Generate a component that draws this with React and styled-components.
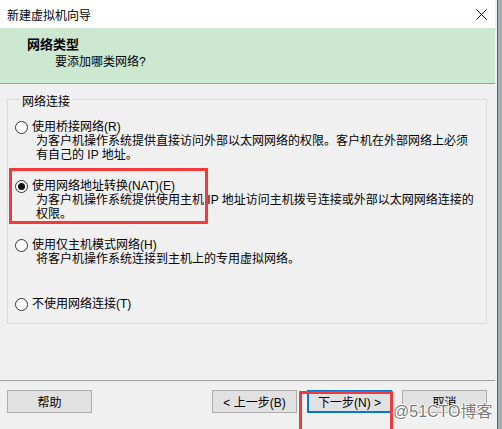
import styled, { createGlobalStyle } from "styled-components";

const GlobalStyle = createGlobalStyle`
  html, body {
    margin: 0;
    padding: 0;
    background: #ffffff;
  }
  body {
    font-family: "Liberation Sans", "Noto Sans CJK SC", sans-serif;
    font-size: 12px;
    color: #000;
  }
`;

const Page = styled.div`
  display: flex;
  width: 502px;
  height: 429px;
  overflow: hidden;
`;

const Window = styled.div`
  position: relative;
  display: flex;
  flex-direction: column;
  width: 495px;
  height: 429px;
  overflow: hidden;
  background: #f0f0f0;
`;

const RightStrip = styled.div`
  display: flex;
  flex: 1;
`;

const StripPart = styled.div`
  width: ${(p) => p.$w}px;
  background: ${(p) => p.$bg};
`;

const TitleBar = styled.div`
  display: flex;
  align-items: center;
  justify-content: space-between;
  height: 28px;
  padding: 0 8px 0 7px;
  background: #ffffff;
  font-family: "Noto Sans CJK SC", sans-serif;
  font-size: 12px;
`;

const Header = styled.div`
  display: flex;
  flex-direction: column;
  height: 56px;
  padding: 8px 0 0 27px;
  box-sizing: border-box;
  background: #cde8d1;
  border-bottom: 1px solid #a0a0a0;
`;

const HeaderTitle = styled.div`
  font-family: "Noto Sans CJK SC", sans-serif;
  font-weight: 700;
  font-size: 13px;
  line-height: 16px;
`;

const HeaderSub = styled.div`
  padding-left: 28px;
  margin-top: 2px;
  line-height: 16px;
`;

const Body = styled.div`
  flex: 1;
  padding: 6px 8px 0 7px;
`;

const Group = styled.fieldset`
  margin: 0;
  padding: 12px 7px 12px 7px;
  border: 1px solid #dcdcdc;
  min-width: 0;
`;

const Legend = styled.legend`
  margin-left: 5px;
  padding: 6px 2px 0 2px;
  line-height: 12px;
`;

const Options = styled.div`
  display: flex;
  flex-direction: column;
  gap: 17px;
`;

const Option = styled.div`
  display: flex;
  flex-direction: column;
`;

const OptionLabel = styled.label`
  display: flex;
  align-items: center;
  gap: 4px;
  line-height: 14px;
  white-space: nowrap;
`;

const Radio = styled.span`
  display: flex;
  align-items: center;
  justify-content: center;
  width: 13px;
  height: 13px;
  box-sizing: border-box;
  border: 1px solid #333;
  border-radius: 50%;
  background: #fff;

  &::after {
    content: "";
    display: ${(p) => (p.$checked ? "block" : "none")};
    width: 7px;
    height: 7px;
    border-radius: 50%;
    background: #111;
  }
`;

const Desc = styled.div`
  display: flex;
  flex-direction: column;
  min-height: 28px;
  padding-left: 21px;
  line-height: 14px;
  white-space: nowrap;
`;

const Footer = styled.div`
  display: flex;
  align-items: flex-start;
  height: 39px;
  padding: 9px 8px 0 7px;
  border-top: 1px solid #a0a0a0;
`;

const Nav = styled.div`
  display: flex;
  gap: 10px;
  margin-left: auto;
`;

const Button = styled.button`
  width: 85px;
  height: 23px;
  padding: 0;
  box-sizing: border-box;
  background: #e1e1e1;
  border: ${(p) => (p.$default ? "2px solid #0078d7" : "1px solid #adadad")};
  font-family: "Liberation Sans", "Noto Sans CJK SC", sans-serif;
  font-size: 12px;
  color: #000;
`;

const Mark = styled.div`
  position: absolute;
  left: ${(p) => p.$x}px;
  top: ${(p) => p.$y}px;
  width: ${(p) => p.$w}px;
  height: ${(p) => p.$h}px;
  box-sizing: border-box;
  border: 3px solid #f23a3a;
  pointer-events: none;
`;

const Watermark = styled.div`
  position: absolute;
  left: 393px;
  top: 402px;
  font-family: "Liberation Sans", "Noto Sans CJK SC", sans-serif;
  font-size: 16px;
  line-height: 20px;
  color: rgba(95, 95, 95, 0.85);
  text-shadow: 1px 0 #fff, -1px 0 #fff, 0 1px #fff, 0 -1px #fff;
  white-space: nowrap;
`;

const CloseIcon = () => (
  <svg width="11" height="11" viewBox="0 0 11 11">
    <path d="M0.5 0.5 L10.5 10.5 M10.5 0.5 L0.5 10.5" stroke="#000" strokeWidth="1" />
  </svg>
);

const options = [
  {
    label: "使用桥接网络(R)",
    desc: [
      "为客户机操作系统提供直接访问外部以太网网络的权限。客户机在外部网络上必须",
      "有自己的 IP 地址。",
    ],
  },
  {
    label: "使用网络地址转换(NAT)(E)",
    checked: true,
    desc: [
      "为客户机操作系统提供使用主机 IP 地址访问主机拨号连接或外部以太网网络连接的",
      "权限。",
    ],
  },
  {
    label: "使用仅主机模式网络(H)",
    desc: ["将客户机操作系统连接到主机上的专用虚拟网络。"],
  },
  { label: "不使用网络连接(T)" },
];

export default function App() {
  return (
    <Page>
      <GlobalStyle />
      <Window>
        <TitleBar>
          <span>新建虚拟机向导</span>
          <CloseIcon />
        </TitleBar>
        <Header>
          <HeaderTitle>网络类型</HeaderTitle>
          <HeaderSub>要添加哪类网络?</HeaderSub>
        </Header>
        <Body>
          <Group>
            <Legend>网络连接</Legend>
            <Options>
              {options.map((o) => (
                <Option key={o.label}>
                  <OptionLabel>
                    <Radio $checked={o.checked} />
                    {o.label}
                  </OptionLabel>
                  {o.desc && (
                    <Desc>
                      {o.desc.map((line) => (
                        <span key={line}>{line}</span>
                      ))}
                    </Desc>
                  )}
                </Option>
              ))}
            </Options>
          </Group>
        </Body>
        <Footer>
          <Button>帮助</Button>
          <Nav>
            <Button>&lt; 上一步(B)</Button>
            <Button $default>下一步(N) &gt;</Button>
            <Button>取消</Button>
          </Nav>
        </Footer>
        <Mark $x={9} $y={168} $w={199} $h={56} />
        <Mark $x={299} $y={391} $w={94} $h={60} />
        <Watermark>@51CTO博客</Watermark>
      </Window>
      <RightStrip>
        <StripPart $w={2} $bg="#eef0f4" />
        <StripPart $w={1} $bg="#2f62d8" />
        <StripPart $w={4} $bg="#a7abb3" />
      </RightStrip>
    </Page>
  );
}
